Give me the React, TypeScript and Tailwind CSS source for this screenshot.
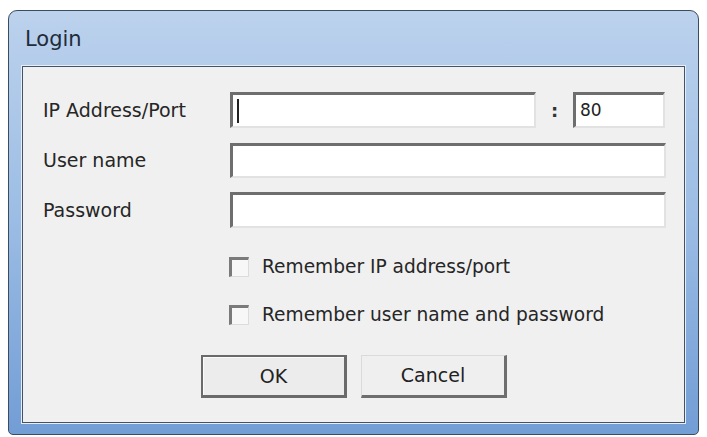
const sunken =
  "bg-white border-t-[3px] border-l-[3px] border-b-2 border-r-2 border-t-[#6e6e6e] border-l-[#6e6e6e] border-b-[#e2e2e2] border-r-[#e2e2e2]";

const Field = ({ className, children }: { className: string; children?: React.ReactNode }) => (
  <div className={`${sunken} ${className} flex items-center`}>{children}</div>
);

const Check = ({ label }: { label: string }) => (
  <div className="flex items-center h-[22px]">
    <div className="w-[20px] h-[20px] bg-[#f7f7f7] border-t-[3px] border-l-[3px] border-b border-r border-t-[#7a7a7a] border-l-[#7a7a7a] border-b-[#dcdcdc] border-r-[#dcdcdc]" />
    <span className="ml-[13px] text-[18.6px] text-[#262626] leading-none">{label}</span>
  </div>
);

const App = (): JSX.Element => {
  return (
    <div
      className="w-[707px] h-[437px] bg-white overflow-hidden pt-[10px] pl-[8px]"
      style={{ fontFamily: '"DejaVu Sans", Tahoma, sans-serif' }}
    >
      <div className="w-[691px] h-[425px] rounded-t-[9px] rounded-b-[5px] border border-[#3c4b5e] bg-gradient-to-b from-[#bcd2ed] via-[#9bbce4] to-[#729dd5] flex flex-col px-[13px]">
        <div className="h-[55px] flex items-center pl-[3px] pt-[2px]">
          <span className="text-[21px] text-[#1f2c3c]">Login</span>
        </div>
        <div className="h-[357px] bg-[#f0f0f0] border border-[#435268] shadow-[0_0_0_1px_#e6eef8] flex flex-col">
          <div className="flex items-center mt-[25px] h-[36px]">
            <span className="w-[207px] pl-[20px] text-[19px] text-[#262626]">IP Address/Port</span>
            <Field className="w-[306px] h-[36px]">
              <div className="ml-[4px] w-[2px] h-[24px] bg-[#222]" />
            </Field>
            <span className="w-[37px] text-center text-[18px] text-[#333] font-bold">:</span>
            <Field className="w-[92px] h-[36px]">
              <span className="ml-[4px] text-[17px] text-[#222]">80</span>
            </Field>
          </div>
          <div className="flex items-center mt-[15px] h-[35px]">
            <span className="w-[207px] pl-[20px] text-[19px] text-[#262626]">User name</span>
            <Field className="w-[436px] h-[35px]" />
          </div>
          <div className="flex items-center mt-[14px] h-[36px]">
            <span className="w-[207px] pl-[20px] text-[19px] text-[#262626]">Password</span>
            <Field className="w-[436px] h-[36px]" />
          </div>
          <div className="flex flex-col pl-[206px] mt-[28px] gap-[26px]">
            <Check label="Remember IP address/port" />
            <Check label="Remember user name and password" />
          </div>
          <div className="flex pl-[178px] mt-[29px] gap-[14px]">
            <button className="w-[146px] h-[43px] bg-[#ececec] border-2 border-[#6a6a6a] border-b-[3px] border-r-[3px] shadow-[inset_1px_1px_0_#fafafa] text-[19px] text-[#222]">
              OK
            </button>
            <button className="w-[146px] h-[43px] bg-[#efefef] border border-t-[#dadada] border-l-[#dadada] border-b-[3px] border-r-[3px] border-b-[#6e6e6e] border-r-[#6e6e6e] text-[19px] text-[#222]">
              Cancel
            </button>
          </div>
        </div>
      </div>
    </div>
  );
};

export default App;
